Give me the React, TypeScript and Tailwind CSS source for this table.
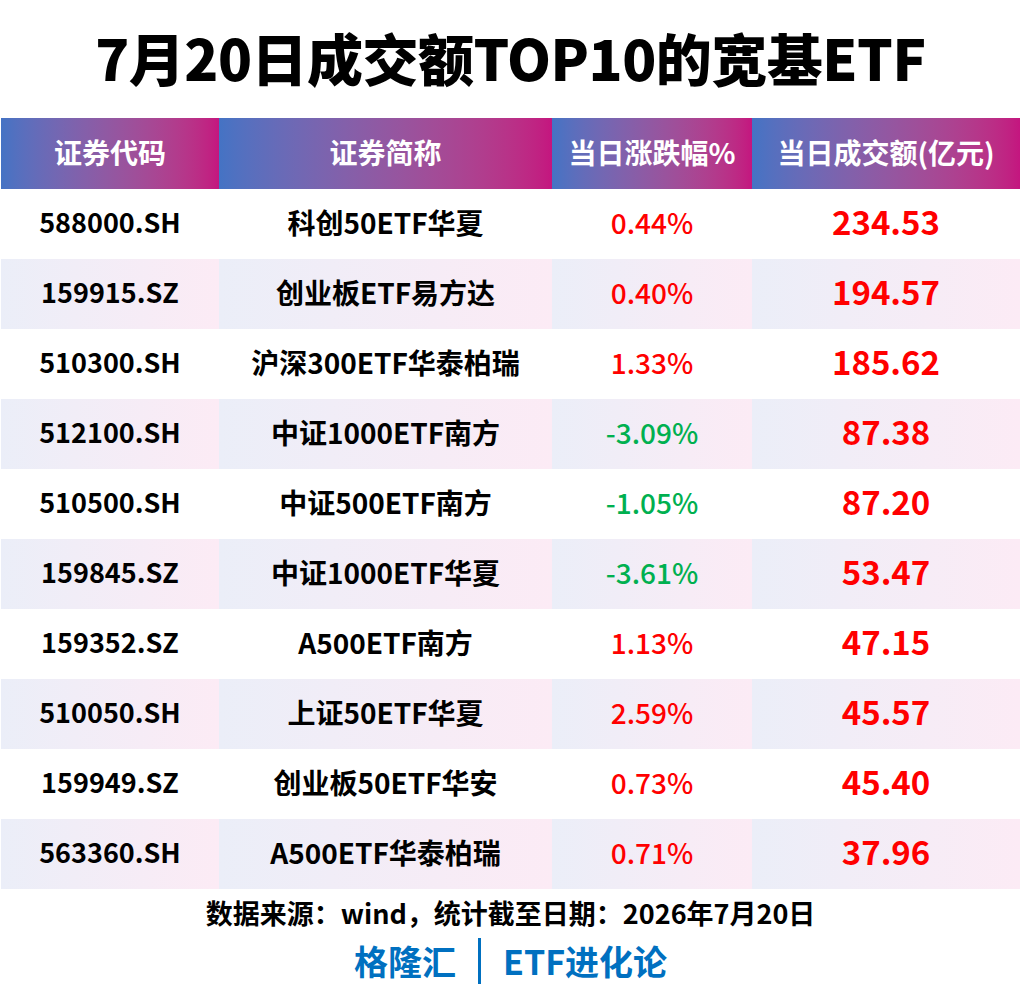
const rows = [
  { code: '588000.SH', name: '科创50ETF华夏', pct: '0.44%', amt: '234.53' },
  { code: '159915.SZ', name: '创业板ETF易方达', pct: '0.40%', amt: '194.57' },
  { code: '510300.SH', name: '沪深300ETF华泰柏瑞', pct: '1.33%', amt: '185.62' },
  { code: '512100.SH', name: '中证1000ETF南方', pct: '-3.09%', amt: '87.38' },
  { code: '510500.SH', name: '中证500ETF南方', pct: '-1.05%', amt: '87.20' },
  { code: '159845.SZ', name: '中证1000ETF华夏', pct: '-3.61%', amt: '53.47' },
  { code: '159352.SZ', name: 'A500ETF南方', pct: '1.13%', amt: '47.15' },
  { code: '510050.SH', name: '上证50ETF华夏', pct: '2.59%', amt: '45.57' },
  { code: '159949.SZ', name: '创业板50ETF华安', pct: '0.73%', amt: '45.40' },
  { code: '563360.SH', name: 'A500ETF华泰柏瑞', pct: '0.71%', amt: '37.96' },
]

const cols = ['w-[218px]', 'w-[333px]', 'w-[200px]', 'w-[268px]']
const headers = ['证券代码', '证券简称', '当日涨跌幅%', '当日成交额(亿元)']

export default function App() {
  return (
    <div className="w-[1021px] h-[990px] bg-white font-['Noto_Sans_CJK_SC',sans-serif] text-black">
      {/* Title */}
      <h1 className="h-[118px] flex items-center justify-center pb-1 text-[56px] font-black tracking-[-0.5px]">
        7月20日成交额TOP10的宽基ETF
      </h1>

      {/* Table */}
      <div className="pl-px">
        <div className="flex h-[71px]">
          {headers.map((h, i) => (
            <div
              key={h}
              className={`${cols[i]} flex items-center justify-center pb-1 bg-gradient-to-r from-[#4473c4] to-[#c4157f] text-white text-[28px] font-semibold`}
            >
              {h}
            </div>
          ))}
        </div>
        {rows.map((r, idx) => {
          const shaded = idx % 2 === 1
          const cell = `flex items-center justify-center pb-1 ${shaded ? 'bg-gradient-to-r from-[#ebeef8] to-[#fcebf5]' : 'bg-white'}`
          const down = r.pct.startsWith('-')
          return (
            <div key={r.code} className="flex h-[70px]">
              <div className={`${cols[0]} ${cell} text-[27px] font-semibold`}>{r.code}</div>
              <div className={`${cols[1]} ${cell} text-[28px] font-semibold`}>{r.name}</div>
              <div className={`${cols[2]} ${cell} text-[28px] font-medium ${down ? 'text-[#00b050]' : 'text-[#ff0000]'}`}>
                {r.pct}
              </div>
              <div className={`${cols[3]} ${cell} text-[33px] font-bold text-[#ff0000]`}>{r.amt}</div>
            </div>
          )
        })}
      </div>

      {/* Footer */}
      <div className="flex flex-col items-center">
        <p className="mt-[7px] text-[27px] font-bold leading-[34px]">数据来源：wind，统计截至日期：2026年7月20日</p>
        <p className="mt-[8px] flex items-center text-[34px] font-bold leading-[46px] text-[#0070c0]">
          格隆汇
          <span className="mx-[22px] w-[3px] h-[46px] bg-[#0070c0]" />
          ETF进化论
        </p>
      </div>
    </div>
  )
}
